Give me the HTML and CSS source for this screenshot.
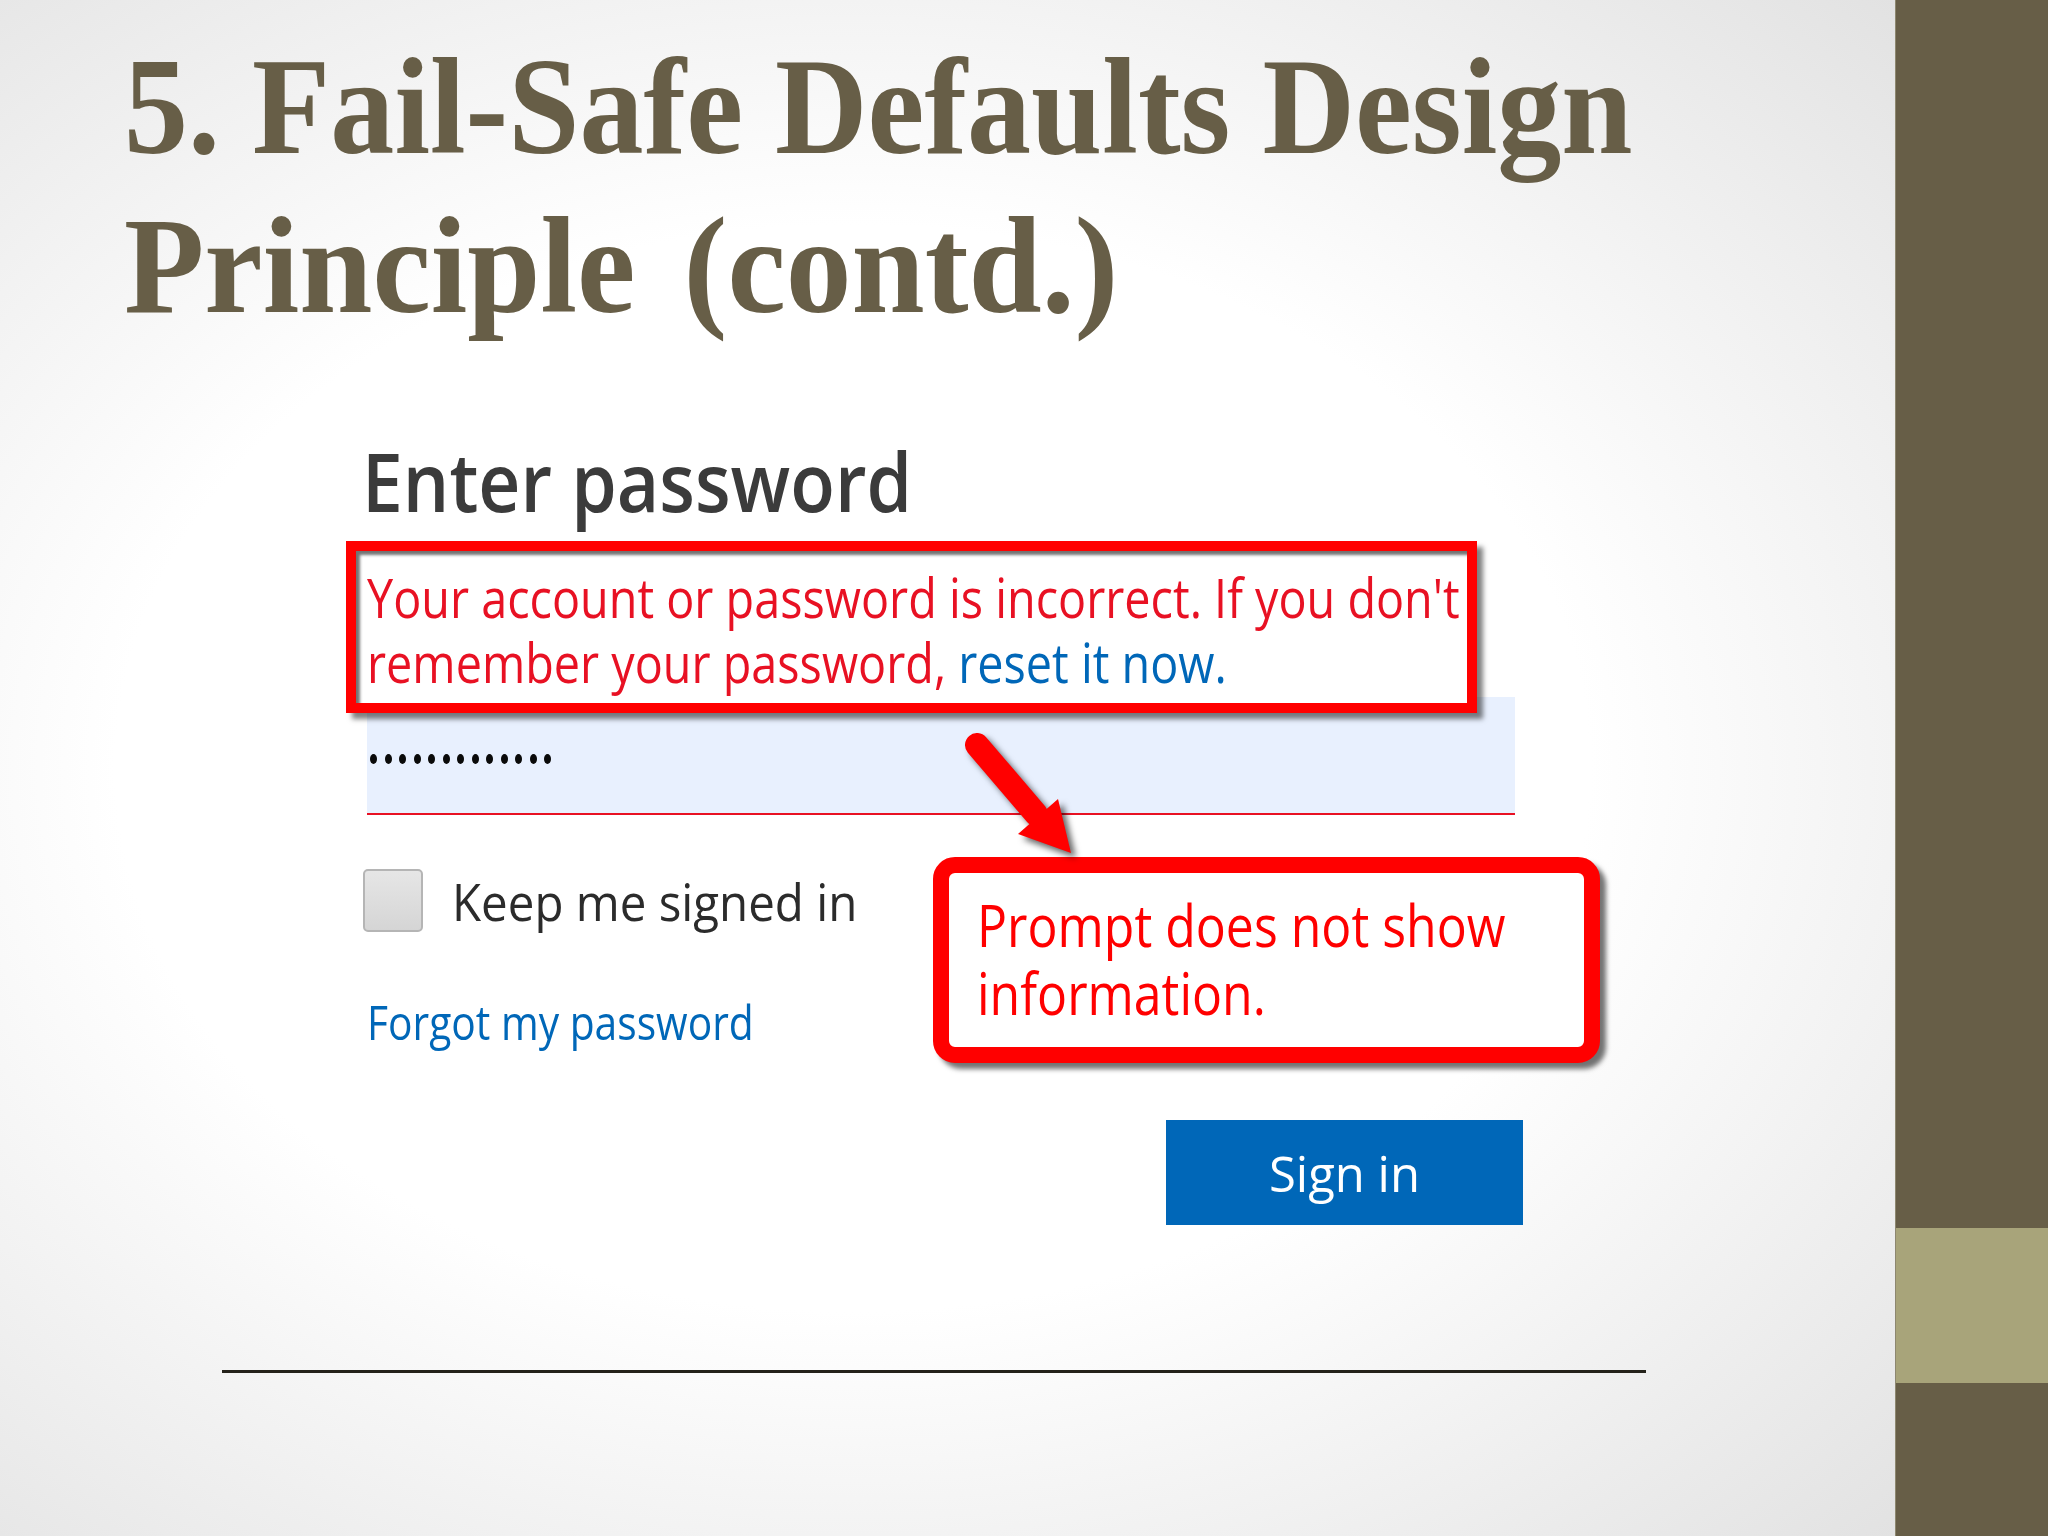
FILE: index.html
```html
<!DOCTYPE html>
<html lang="en">
<head>
<meta charset="utf-8">
<title>5. Fail-Safe Defaults Design Principle (contd.)</title>
<link rel="stylesheet" href="styles.css">
</head>
<body>
<div class="slide">
  <main class="main">
    <h1 class="title"><span class="title-line title-line-1">5. Fail-Safe Defaults Design</span><span class="title-line title-line-2">Principle (contd.)</span></h1>
    <section class="login">
      <h2 class="login-head"><span class="sq sq-head">Enter password</span></h2>
      <div class="err-box">
        <p class="err-text">Your account or password is incorrect. If you don't<br>remember your password, <span class="link">reset it now.</span></p>
      </div>
      <div class="pw-field">
        <span class="dot"></span><span class="dot"></span><span class="dot"></span><span class="dot"></span><span class="dot"></span><span class="dot"></span><span class="dot"></span><span class="dot"></span><span class="dot"></span><span class="dot"></span><span class="dot"></span><span class="dot"></span><span class="dot"></span>
      </div>
      <div class="lower">
        <div class="lower-left">
          <div class="keep"><span class="checkbox"></span><span class="sq keep-text">Keep me signed in</span></div>
          <div class="forgot">Forgot my password</div>
        </div>
        <div class="lower-right">
          <div class="note-box">
            <p class="note-text">Prompt does not show<br>information.</p>
          </div>
          <div class="signin"><span class="sq signin-text">Sign in</span></div>
        </div>
      </div>
      <svg class="arrow" viewBox="0 0 200 160" width="200" height="160">
        <line x1="37" y1="25" x2="96" y2="94" stroke="#ff0000" stroke-width="24" stroke-linecap="round"/>
        <polygon points="78,114 118,79 131,133" fill="#ff0000"/>
      </svg>
    </section>
    <div class="rule"></div>
  </main>
  <aside class="bar">
    <div class="bar-top"></div>
    <div class="bar-band"></div>
    <div class="bar-bottom"></div>
  </aside>
</div>
</body>
</html>
```
FILE: styles.css
```css
html, body {
  margin: 0;
  padding: 0;
}
body {
  width: 2048px;
  height: 1536px;
  overflow: hidden;
}
.slide {
  display: flex;
  width: 2048px;
  height: 1536px;
}
.main {
  flex: 1;
  position: relative;
  padding-top: 28px;
  background: radial-gradient(ellipse farthest-corner at 45% 50%, #ffffff 50%, #e2e2e2 100%);
}
.title {
  margin: 0 0 0 124px;
  font-family: "Liberation Serif", "Times New Roman", serif;
  font-weight: 700;
  font-size: 137px;
  line-height: 159px;
  color: #675e47;
  white-space: nowrap;
}
.title-line {
  display: block;
  transform-origin: 0 0;
}
.title-line-1 {
  transform: scaleX(0.935);
}
.title-line-2 {
  transform: scaleX(0.96);
  word-spacing: 16px;
}
.login {
  position: relative;
  margin: 84px 0 0 346px;
  width: 1300px;
  font-family: "Open Sans", "Noto Sans", sans-serif;
}
.sq {
  display: inline-block;
  transform-origin: 0 50%;
}
.login-head {
  margin: 0 0 0 16px;
  font-weight: 600;
  font-size: 82px;
  line-height: 100px;
  color: #3b3b3b;
  white-space: nowrap;
}
.sq-head {
  transform: scaleX(0.893);
}
.err-box {
  position: relative;
  z-index: 1;
  box-sizing: border-box;
  width: 1131px;
  height: 172px;
  margin-top: 11px;
  padding: 13px 0 0 11px;
  border: 10px solid #ff0000;
  background: #ffffff;
  box-shadow: inset 4px 4px 3px rgba(0, 0, 0, 0.55), 6px 6px 5px rgba(0, 0, 0, 0.5);
}
.err-text {
  margin: 0;
  font-size: 55px;
  line-height: 65px;
  color: #e81123;
  white-space: nowrap;
  transform: scaleX(0.85);
  transform-origin: 0 0;
}
.link {
  color: #0067b8;
}
.pw-field {
  box-sizing: border-box;
  width: 1148px;
  height: 118px;
  margin: -16px 0 0 21px;
  padding: 8px 0 0 3px;
  display: flex;
  align-items: center;
  gap: 7.5px;
  background: #e8f0fe;
  border-bottom: 2px solid #e81123;
}
.dot {
  width: 7px;
  height: 10px;
  border-radius: 50%;
  background: #0a0a0a;
}
.lower {
  display: flex;
  margin-top: 42px;
}
.lower-left {
  box-sizing: border-box;
  width: 587px;
  padding: 12px 0 0 17px;
}
.keep {
  display: flex;
  align-items: flex-start;
}
.checkbox {
  flex: none;
  box-sizing: border-box;
  width: 60px;
  height: 63px;
  border: 2px solid #b5b5b5;
  border-radius: 5px;
  background: linear-gradient(#e6e6e6, #d5d5d5);
}
.keep-text {
  margin-left: 29px;
  font-size: 52px;
  line-height: 63px;
  color: #2b2b2b;
  white-space: nowrap;
  transform: scaleX(0.913);
}
.forgot {
  margin: 60px 0 0 4px;
  font-size: 48px;
  line-height: 60px;
  color: #0067b8;
  white-space: nowrap;
  transform: scaleX(0.849);
  transform-origin: 0 0;
}
.lower-right {
  display: flex;
  flex-direction: column;
  align-items: flex-start;
}
.note-box {
  box-sizing: border-box;
  width: 667px;
  height: 206px;
  padding: 17px 0 0 28px;
  border: 16px solid #ff0000;
  border-radius: 22px;
  background: #ffffff;
  box-shadow: 6px 6px 5px rgba(0, 0, 0, 0.55);
}
.note-text {
  margin: 0;
  font-size: 59px;
  line-height: 68px;
  color: #ff0000;
  white-space: nowrap;
  transform: scaleX(0.847);
  transform-origin: 0 0;
}
.signin {
  box-sizing: border-box;
  width: 357px;
  height: 105px;
  margin: 57px 0 0 233px;
  display: flex;
  align-items: center;
  justify-content: center;
  background: #0067b8;
  color: #ffffff;
  font-size: 49px;
  line-height: 66px;
}
.signin-text {
  transform-origin: 50% 50%;
}
.arrow {
  position: absolute;
  z-index: 2;
  left: 594px;
  top: 290px;
  overflow: visible;
  filter: drop-shadow(5px 5px 3px rgba(0, 0, 0, 0.6));
}
.rule {
  width: 1424px;
  height: 3px;
  margin: 145px 0 0 222px;
  background: #24221a;
}
.bar {
  box-sizing: border-box;
  width: 153px;
  display: flex;
  flex-direction: column;
  border-left: 1px solid #8d876f;
}
.bar-top {
  flex: 1;
  background: #675e47;
}
.bar-band {
  height: 155px;
  background: #a8a47a;
}
.bar-bottom {
  height: 153px;
  background: #675e47;
}
```
